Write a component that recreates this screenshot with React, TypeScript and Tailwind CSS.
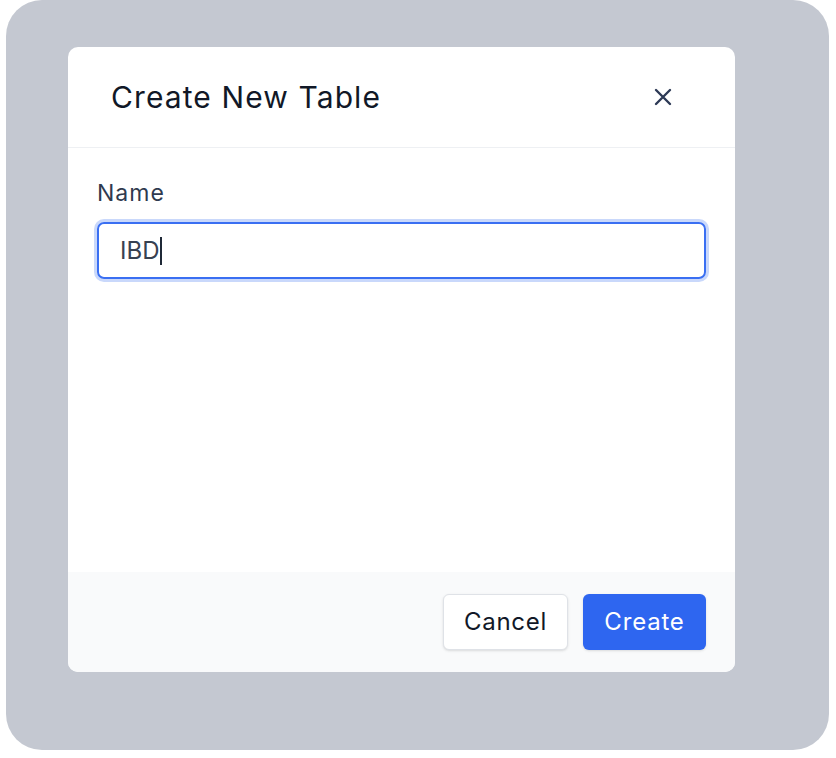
export default function App() {
  return (
    <div
      className="w-[836px] h-[758px] bg-white"
      style={{ fontFamily: "Inter, 'Noto Sans', sans-serif" }}
    >
      <div className="ml-[6px] w-[823px] h-[750px] rounded-[36px] bg-[#c4c8d1] pt-[47px] pl-[62px]">
        <div className="w-[667px] h-[625px] bg-white rounded-[10px] overflow-hidden flex flex-col">
          {/* Header */}
          <div className="h-[101px] shrink-0 border-b border-[#eef0f3] flex items-center justify-between pl-[43px] pr-[54px]">
            <h2 className="text-[30px] leading-[36px] text-[#111827] font-normal tracking-[1.1px]">
              Create New Table
            </h2>
            <button type="button" className="w-[36px] h-[36px] flex items-center justify-center text-[#2d3a56]">
              <svg width="18" height="18" viewBox="0 0 18 18" fill="none">
                <path d="M2 2L16 16M16 2L2 16" stroke="currentColor" strokeWidth="2.4" strokeLinecap="round" />
              </svg>
            </button>
          </div>

          {/* Body */}
          <div className="flex-1 px-[29px] pt-[29px]">
            <label className="block text-[23px] leading-[32px] text-[#2f3a4f] tracking-[1px]">Name</label>
            <div className="mt-[13px] h-[57px] w-full rounded-[7px] border-2 border-[#3a6ff2] ring-[3px] ring-[#c9d8fb] flex items-center pl-[21px]">
              <span className="text-[24px] leading-[32px] text-[#374151]">IBD</span>
              <span className="ml-[1px] w-[2px] h-[28px] bg-[#1f2937]" />
            </div>
          </div>

          {/* Footer */}
          <div className="h-[100px] shrink-0 bg-[#f9fafb] flex items-center justify-end gap-[15px] pr-[29px]">
            <button
              type="button"
              className="w-[125px] h-[56px] rounded-[6px] bg-white border border-[#dfe2e7] shadow-sm text-[24px] text-[#111827] tracking-[0.7px]"
            >
              Cancel
            </button>
            <button
              type="button"
              className="w-[123px] h-[56px] rounded-[6px] bg-[#2e66f0] shadow-sm text-[24px] text-white tracking-[0.8px]"
            >
              Create
            </button>
          </div>
        </div>
      </div>
    </div>
  );
}
